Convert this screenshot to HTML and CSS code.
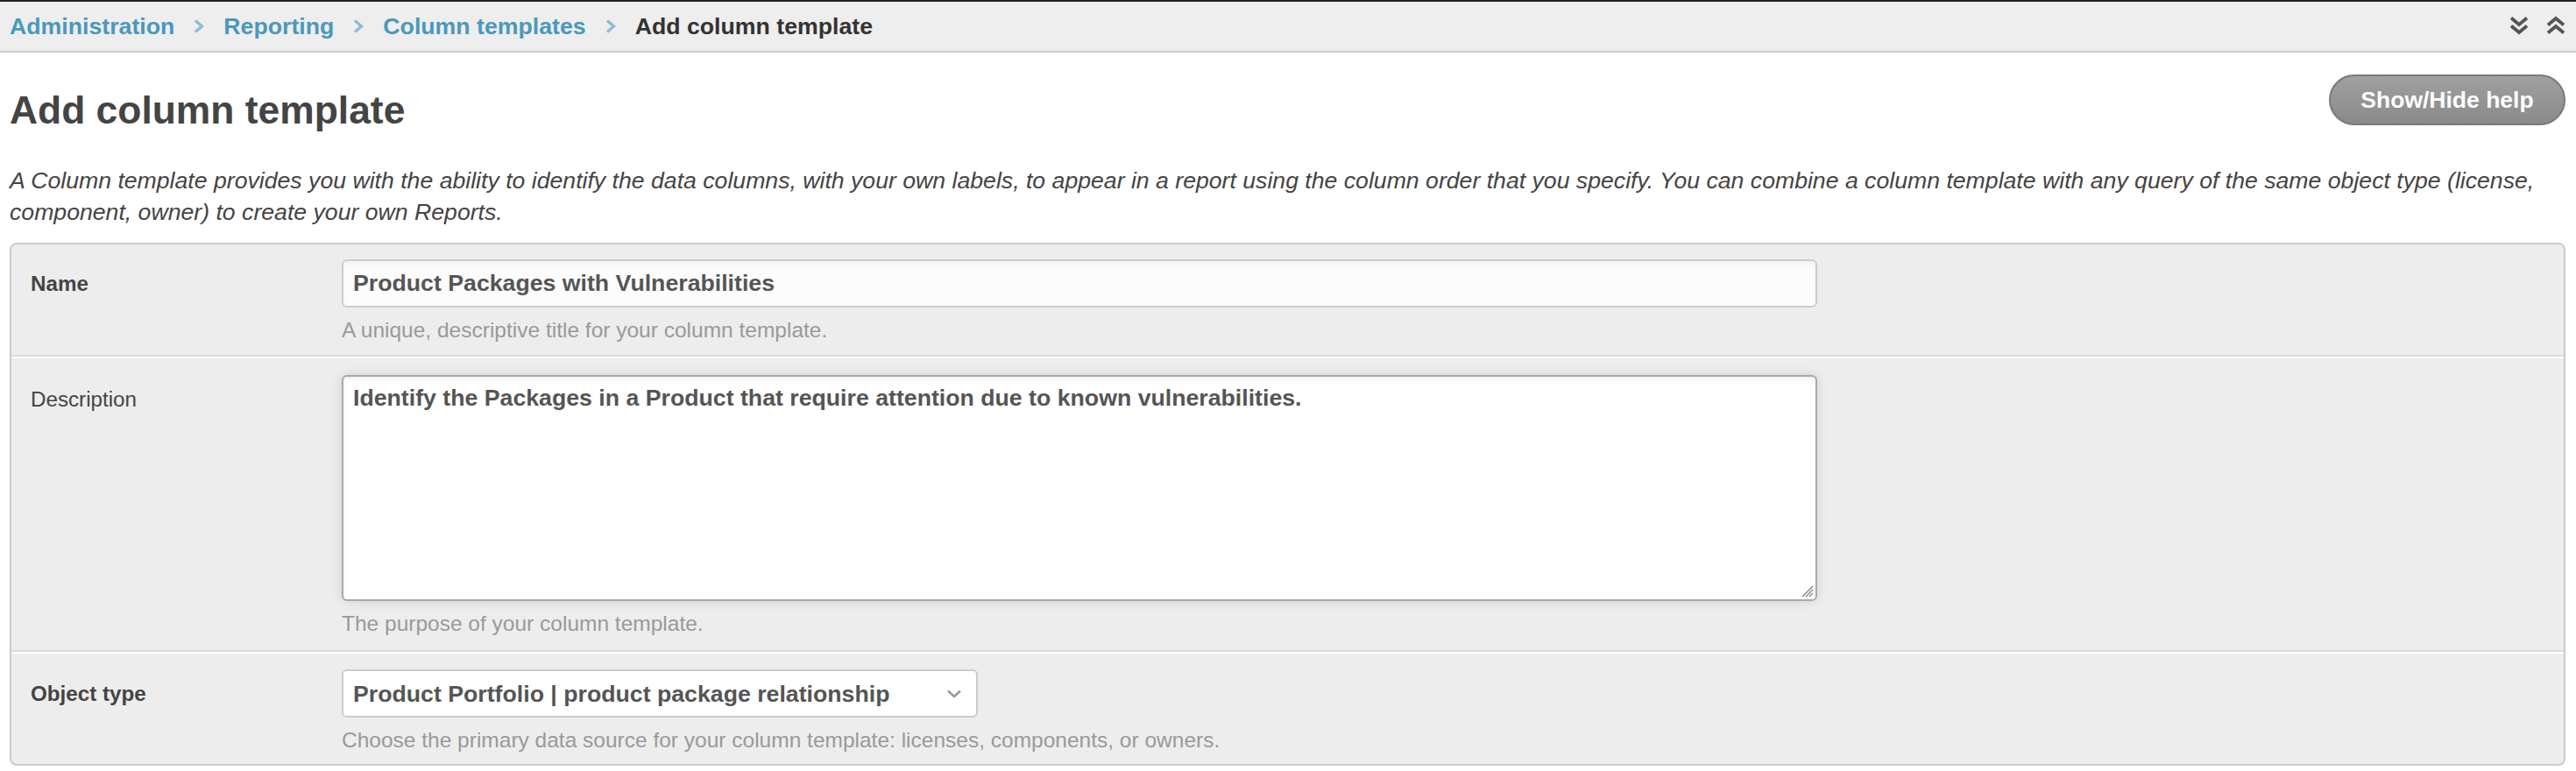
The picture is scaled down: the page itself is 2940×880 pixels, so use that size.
FILE: index.html
```html
<!DOCTYPE html>
<html lang="en">
<head>
<meta charset="utf-8">
<title>Add column template</title>
<link rel="stylesheet" href="styles.css">
</head>
<body>
<div class="topbar">
  <nav class="crumbs">
    <a class="crumb" href="#">Administration</a>
    <svg class="crumb-sep" width="12" height="16" viewBox="0 0 12 16"><polyline points="2,1.5 9.5,8 2,14.5" fill="none" stroke="#8dbcd4" stroke-width="3.4"/></svg>
    <a class="crumb" href="#">Reporting</a>
    <svg class="crumb-sep" width="12" height="16" viewBox="0 0 12 16"><polyline points="2,1.5 9.5,8 2,14.5" fill="none" stroke="#8dbcd4" stroke-width="3.4"/></svg>
    <a class="crumb" href="#">Column templates</a>
    <svg class="crumb-sep" width="12" height="16" viewBox="0 0 12 16"><polyline points="2,1.5 9.5,8 2,14.5" fill="none" stroke="#8dbcd4" stroke-width="3.4"/></svg>
    <span class="crumb current">Add column template</span>
  </nav>
  <div class="tools">
    <svg class="tool" width="24" height="24" viewBox="0 0 24 24"><polyline points="3,3.5 12,11 21,3.5" fill="none" stroke="#555" stroke-width="3.8"/><polyline points="3,12.5 12,20 21,12.5" fill="none" stroke="#555" stroke-width="3.8"/></svg>
    <svg class="tool" width="24" height="24" viewBox="0 0 24 24"><polyline points="3,11.5 12,4 21,11.5" fill="none" stroke="#555" stroke-width="3.8"/><polyline points="3,20.5 12,13 21,20.5" fill="none" stroke="#555" stroke-width="3.8"/></svg>
  </div>
</div>

<main class="page">
  <div class="header">
    <h1 class="title">Add column template</h1>
    <button class="help-btn" type="button">Show/Hide help</button>
  </div>
  <p class="intro">A Column template provides you with the ability to identify the data columns, with your own labels, to appear in a report using the column order that you specify. You can combine a column template with any query of the same object type (license, component, owner) to create your own Reports.</p>

  <form class="panel">
    <div class="row row-name">
      <label class="label required" for="name">Name</label>
      <div class="field">
        <input id="name" class="text-input" type="text" value="Product Packages with Vulnerabilities">
        <div class="hint">A unique, descriptive title for your column template.</div>
      </div>
    </div>
    <div class="row row-desc">
      <label class="label" for="desc">Description</label>
      <div class="field">
        <div class="textarea-wrap">
          <textarea id="desc" class="textarea">Identify the Packages in a Product that require attention due to known vulnerabilities.</textarea>
          <svg class="grip" width="14" height="14" viewBox="0 0 14 14"><line x1="13" y1="1" x2="1" y2="13" stroke="#888" stroke-width="1.4"/><line x1="13" y1="5" x2="5" y2="13" stroke="#888" stroke-width="1.4"/><line x1="13" y1="9" x2="9" y2="13" stroke="#888" stroke-width="1.4"/></svg>
        </div>
        <div class="hint">The purpose of your column template.</div>
      </div>
    </div>
    <div class="row row-type">
      <label class="label required" for="otype">Object type</label>
      <div class="field">
        <div class="select-wrap">
          <select id="otype" class="select">
            <option>Product Portfolio | product package relationship</option>
          </select>
          <svg class="select-arrow" width="18" height="10" viewBox="0 0 18 10"><polyline points="2,1.5 9,8 16,1.5" fill="none" stroke="#9a9a9a" stroke-width="2.6"/></svg>
        </div>
        <div class="hint">Choose the primary data source for your column template: licenses, components, or owners.</div>
      </div>
    </div>
  </form>
</main>
</body>
</html>
```

FILE: styles.css
```css
* {
  box-sizing: border-box;
}

html, body {
  margin: 0;
  padding: 0;
  background: #ffffff;
}

body {
  font-family: "Liberation Sans", Arial, Helvetica, sans-serif;
  color: #444444;
}

.topbar {
  display: flex;
  align-items: center;
  justify-content: space-between;
  height: 60px;
  background: #eeeeee;
  border-top: 2px solid #222222;
  border-bottom: 2px solid #cccccc;
  padding: 0 11px 0 11px;
}

.crumbs {
  display: flex;
  align-items: center;
}

.crumb {
  font-size: 26.7px;
  font-weight: bold;
  color: #4b98bd;
  text-decoration: none;
}

.crumb.current {
  color: #333333;
}

.crumb-sep {
  margin: 0 22px;
  display: block;
}

.tools {
  display: flex;
  align-items: center;
  gap: 18px;
  margin-top: -2px;
}

.tool {
  display: block;
}

.page {
  padding: 0 12px 0 11px;
}

.header {
  display: flex;
  justify-content: space-between;
  align-items: flex-start;
  padding-top: 25px;
}

.title {
  margin: 14px 0 0 0;
  font-size: 44.4px;
  line-height: 53px;
  font-weight: bold;
  color: #444444;
}

.help-btn {
  width: 270px;
  height: 58px;
  border-radius: 29px;
  border: 2px solid #7a7a7a;
  background: linear-gradient(#a0a0a0, #8a8a8a);
  color: #ffffff;
  font-family: "Liberation Sans", Arial, sans-serif;
  font-size: 26.5px;
  font-weight: bold;
  padding: 0;
}

.intro {
  margin: 36px 0 0 0;
  font-size: 26.65px;
  line-height: 36px;
  font-style: italic;
  color: #444444;
}

.panel {
  margin: 17px 0 0 0;
  background: #ededed;
  border: 2px solid #cccccc;
  border-radius: 8px;
}

.row {
  display: grid;
  grid-template-columns: 377px 1fr;
  border-top: 2px solid #ffffff;
  border-bottom: 2px solid #dadada;
}

.row-name {
  padding: 17px 0 11px 0;
  border-top: 0;
}

.row-desc {
  padding: 19px 0 13px 0;
}

.row-type {
  padding: 18px 0 10px 0;
  border-bottom: 0;
}

.label {
  padding-left: 22px;
  font-size: 24.2px;
  line-height: 55px;
  color: #444444;
}

.label.required {
  font-weight: bold;
}

.field {
  display: flex;
  flex-direction: column;
  align-items: flex-start;
}

.text-input {
  width: 1684px;
  height: 55px;
  padding: 0 11px;
  border: 2px solid #cccccc;
  border-radius: 6px;
  background: #fcfcfc;
  box-shadow: inset 0 4px 6px rgba(0, 0, 0, 0.04);
  font-family: "Liberation Sans", Arial, sans-serif;
  font-size: 26.7px;
  font-weight: bold;
  color: #555555;
  outline: none;
}

.textarea-wrap {
  position: relative;
  width: 1684px;
  height: 258px;
}

.textarea {
  display: block;
  width: 100%;
  height: 100%;
  padding: 6px 11px;
  border: 2px solid #a9a9a9;
  border-radius: 6px;
  background: #ffffff;
  box-shadow: inset 0 2px 4px rgba(0, 0, 0, 0.08), 0 0 14px rgba(0, 0, 0, 0.12);
  font-family: "Liberation Sans", Arial, sans-serif;
  font-size: 26.7px;
  line-height: 36px;
  font-weight: bold;
  color: #555555;
  resize: none;
  outline: none;
}

.grip {
  position: absolute;
  right: 4px;
  bottom: 4px;
  display: block;
}

.select-wrap {
  position: relative;
  width: 726px;
}

.select {
  appearance: none;
  -webkit-appearance: none;
  display: block;
  width: 100%;
  height: 55px;
  padding: 0 50px 0 11px;
  border: 2px solid #cccccc;
  border-radius: 6px;
  background: #ffffff;
  font-family: "Liberation Sans", Arial, sans-serif;
  font-size: 26.7px;
  font-weight: bold;
  color: #555555;
  outline: none;
}

.select-arrow {
  position: absolute;
  right: 18px;
  top: 23px;
  display: block;
}

.hint {
  margin-top: 9px;
  font-size: 24.5px;
  line-height: 34px;
  color: #999999;
}
```
